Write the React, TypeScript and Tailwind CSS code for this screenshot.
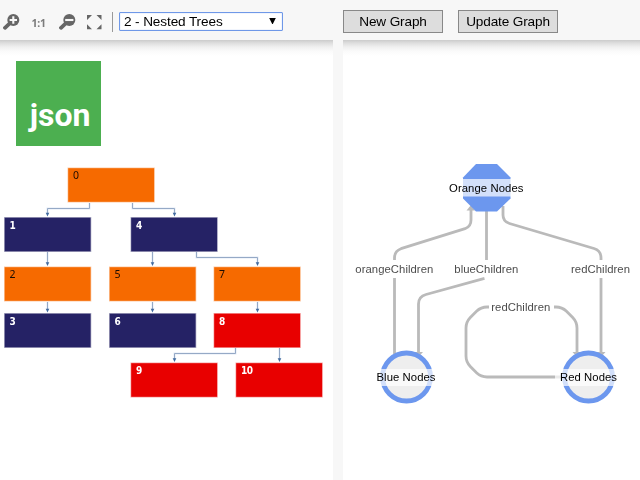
import React from 'react';

type TreeNode = { id: string; x: number; y: number; color: string; dark?: boolean };

const ORANGE = '#f66a00';
const NAVY = '#252265';
const RED = '#e80000';

const treeNodes: TreeNode[] = [
  { id: '0', x: 68, y: 168, color: ORANGE },
  { id: '1', x: 4.5, y: 217.5, color: NAVY, dark: true },
  { id: '4', x: 131, y: 217.5, color: NAVY, dark: true },
  { id: '2', x: 4.5, y: 267, color: ORANGE },
  { id: '5', x: 109.5, y: 267, color: ORANGE },
  { id: '7', x: 214, y: 267, color: ORANGE },
  { id: '3', x: 4.5, y: 313.5, color: NAVY, dark: true },
  { id: '6', x: 109.5, y: 313.5, color: NAVY, dark: true },
  { id: '8', x: 214, y: 313.5, color: RED, dark: true },
  { id: '9', x: 131, y: 363, color: RED, dark: true },
  { id: '10', x: 236, y: 363, color: RED, dark: true },
];

const treeEdges = [
  { d: 'M89.5 203V208.5H47.5V213', x: 47.5, y: 216.5 },
  { d: 'M132.5 203V208.5H174.5V213', x: 174.5, y: 216.5 },
  { d: 'M47.5 252V263', x: 47.5, y: 266 },
  { d: 'M152.5 252V263', x: 152.5, y: 266 },
  { d: 'M196.5 252V257.5H257.5V263', x: 257.5, y: 266 },
  { d: 'M47.5 302V309', x: 47.5, y: 312.5 },
  { d: 'M152.5 302V309', x: 152.5, y: 312.5 },
  { d: 'M257.5 302V309', x: 257.5, y: 312.5 },
  { d: 'M235.5 348V353.5H174.5V359', x: 174.5, y: 362 },
  { d: 'M279.5 348V359', x: 279.5, y: 362 },
];

function Magnifier({ plus }: { plus?: boolean }) {
  return (
    <svg width="18" height="18" viewBox="0 0 18 18" className="block shrink-0">
      <path d="M2 13.8L7 9.2" stroke="#666" strokeWidth="3.8" strokeLinecap="round" />
      <circle cx="10.3" cy="6" r="6" fill="#666" />
      <path d={plus ? 'M6.6 6H14M10.3 2.3V9.7' : 'M6.2 6H14.4'} stroke="#f7f7f7" strokeWidth="2.1" />
    </svg>
  );
}

function FitIcon() {
  return (
    <svg width="15" height="15" viewBox="0 0 15 15" className="block shrink-0" fill="#666">
      <path d="M0 0H5L0 5ZM14.5 0V5L9.5 0ZM0 14.2V9.2L5 14.2ZM14.5 14.2H9.5L14.5 9.2Z" />
    </svg>
  );
}

function TreeGraph() {
  return (
    <svg width="333" height="440" viewBox="0 40 333 440" className="block">
      {treeEdges.map((e) => (
        <g key={e.d}>
          <path d={e.d} fill="none" stroke="#e2eaf5" strokeWidth="2" />
          <path d={e.d} fill="none" stroke="#95a9c6" strokeWidth="1" />
          <path d={`M${e.x - 1.8} ${e.y - 3.8}H${e.x + 1.8}L${e.x} ${e.y}Z`} fill="#416a9f" />
        </g>
      ))}
      {treeNodes.map((n) => (
        <g key={n.id}>
          <rect x={n.x - 0.5} y={n.y - 0.5} width="87.3" height="35" fill={n.color} opacity="0.35" />
          <rect x={n.x + 0.2} y={n.y + 0.2} width="85.9" height="33.6" fill={n.color} />
          <text
            x={n.x + 5}
            y={n.y + 11.4}
            fontFamily={n.dark ? "'DejaVu Sans Condensed', 'DejaVu Sans', sans-serif" : "'Noto Sans', sans-serif"}
            fontSize={n.dark ? 10 : 10.5}
            fontWeight={n.dark ? 700 : 400}
            textLength={n.id.length > 1 ? 12 : undefined}
            fill={n.dark ? '#fff' : '#1c0c00'}
          >
            {n.id}
          </text>
        </g>
      ))}
    </svg>
  );
}

function NestedGraph() {
  return (
    <svg width="297" height="440" viewBox="343 40 297 440" className="block" fontFamily="'Liberation Sans', Arial, sans-serif">
      <g fill="none" stroke="#bababa" strokeWidth="2.8">
        <path d="M394.5 354V278M394.5 260V258Q394.5 251 401 248.7L465 228.7Q471 226.5 471 220V207" />
        <path d="M486.5 211V260M484.5 278.3L426 294.5Q418.5 296.5 418.5 304V354" />
        <path d="M503 206V215Q503 221.5 509.5 223.5L594 248.5Q601 250.5 601 258V260M601 278V354" />
        <path d="M489 307H487Q481 307 476.5 311.2L470.3 317.5Q466 322 466 328V356Q466 362 470.3 366.5L476.5 372.8Q481 377 487 377H565M554 307H556Q562 307 566.5 311.2L572.7 317.5Q577 322 577 328V354" />
      </g>
      <g fill="#bababa">
        <path d="M466.5 210.5L471 205L475 210.5Z" />
        <path d="M414 352H423L418.5 357Z" />
        <path d="M572.5 352H581.5L577 357Z" />
        <path d="M596.5 352H605.5L601 357Z" />
      </g>
      <path d="M476 164H497L510.5 177.5V198.5L497 211.5H476L463 198.5V177.5Z" fill="#6c97ee" />
      <circle cx="406.5" cy="377" r="24" fill="#eee" stroke="#6c97ee" strokeWidth="4.8" />
      <circle cx="588.5" cy="377" r="24" fill="#eee" stroke="#6c97ee" strokeWidth="4.8" />
      <g fill="#fff" fillOpacity=".7">
        <rect x="449" y="179" width="75" height="17.5" />
        <rect x="376" y="369" width="60" height="17" />
        <rect x="555" y="369" width="63" height="17" />
      </g>
      <g fontSize="11.3" fill="#000">
        <text x="449" y="192" textLength="74.5">Orange Nodes</text>
        <text x="376.5" y="381" textLength="59">Blue Nodes</text>
        <text x="560" y="381" textLength="57">Red Nodes</text>
      </g>
      <g fontSize="11.3" fill="#4c4c4c">
        <text x="355.3" y="273" textLength="78">orangeChildren</text>
        <text x="454.3" y="273" textLength="64">blueChildren</text>
        <text x="571" y="273" textLength="59">redChildren</text>
        <text x="491.3" y="311" textLength="59">redChildren</text>
      </g>
    </svg>
  );
}

const shade = 'pointer-events-none absolute inset-x-0 top-0 h-4 bg-[linear-gradient(to_bottom,#cbcbcb_0px,#dedede_3px,#f0f0f0_7px,#fafafa_11px,#ffffff_16px)] mix-blend-multiply';

export default function App() {
  return (
    <div className="flex h-[480px] w-[640px] flex-col overflow-hidden bg-white font-['Liberation_Sans',Arial,sans-serif]">
      <header className="flex h-10 shrink-0 items-start bg-[#f7f7f7]">
        <div className="flex w-[343px] shrink-0 pl-[3px] pt-[14px]">
          <button className="h-[18px] w-[18px]"><Magnifier plus /></button>
          <button className="ml-[10.5px] h-[17px] w-[15.5px] whitespace-nowrap text-left font-['Noto_Sans',sans-serif] text-[10.5px] font-bold leading-[14px] tracking-[-0.2px] text-[#7c7c7c]">1:1</button>
          <button className="ml-[12px] h-[18px] w-[18px]"><Magnifier /></button>
          <button className="ml-[10px] mt-px h-[15px] w-[15px]"><FitIcon /></button>
          <div className="-mt-[2px] ml-[10px] h-5 w-px bg-[#999]" />
          <button className="-mt-[2px] ml-[6px] flex h-[19px] w-[164px] items-center justify-between rounded-[1px] border border-[#6f98e8] bg-white pl-[4px] pr-[6px] text-[13.6px] leading-none tracking-[-0.12px] text-black shadow-[inset_0_0_1px_#6f98e8]">
            <span>2 - Nested Trees</span>
            <svg width="7" height="6" viewBox="0 0 7 6" className="mb-px"><path d="M.2 0H6.8L3.8 6H3.2Z" /></svg>
          </button>
        </div>
        <div className="flex gap-[15px] pt-[10px]">
          <button className="h-[23px] w-[100px] whitespace-nowrap border border-[#888] bg-[#ddd] text-[13.6px] leading-[20px] tracking-[-0.15px] text-black">New Graph</button>
          <button className="h-[23px] w-[100px] whitespace-nowrap border border-[#888] bg-[#ddd] text-[13.6px] leading-[20px] tracking-[-0.15px] text-black">Update Graph</button>
        </div>
      </header>
      <main className="flex min-h-0 flex-1">
        <section className="relative w-[333px] shrink-0 overflow-hidden bg-white">
          <TreeGraph />
          <div className={shade} />
          <div className="absolute left-4 top-[21px] h-[85px] w-[85px] bg-[#4caf50] pr-[10.5px] pt-[36px] text-right font-[Roboto,sans-serif] text-[32px] font-bold leading-[36px] text-white">json</div>
        </section>
        <div className="w-[10px] shrink-0 bg-[#f7f7f7]" />
        <section className="relative min-w-0 flex-1 overflow-hidden bg-white">
          <NestedGraph />
          <div className={shade} />
        </section>
      </main>
    </div>
  );
}
